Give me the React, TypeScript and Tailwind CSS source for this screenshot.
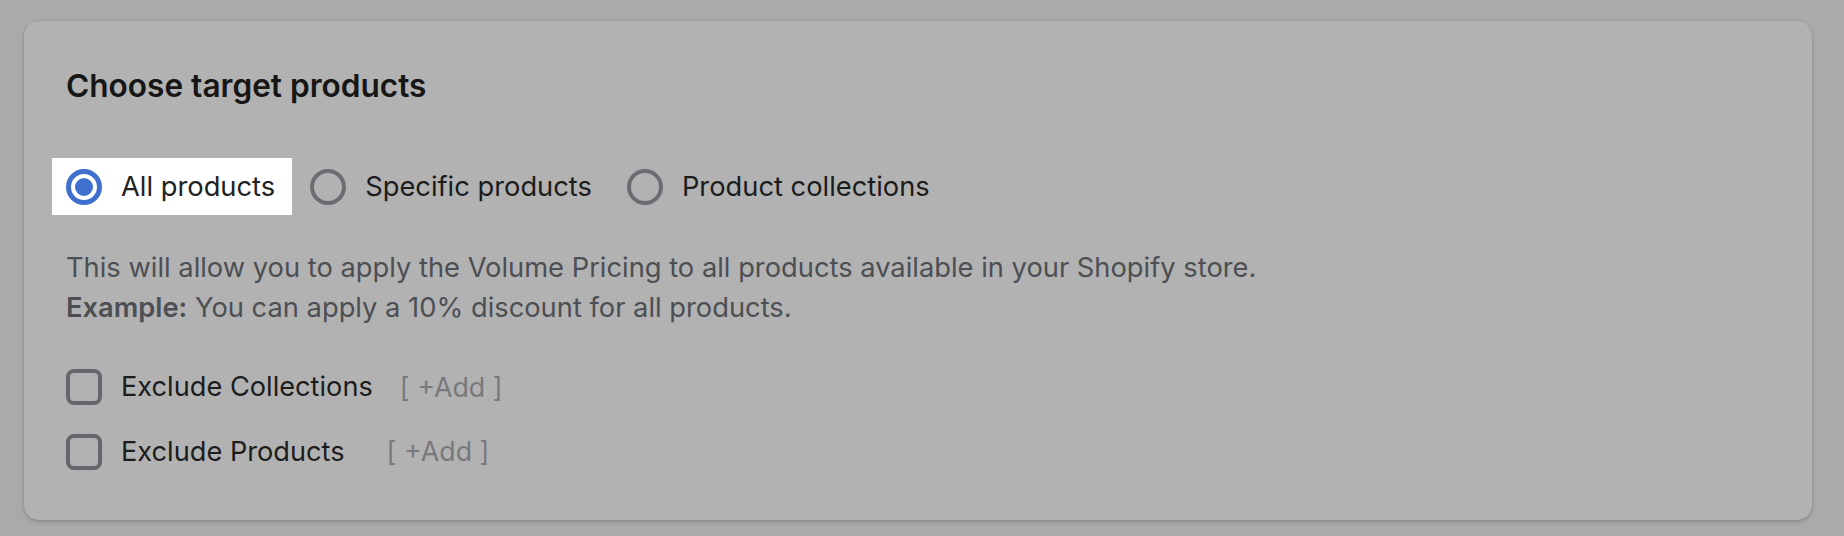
import React from "react";

const font = { fontFamily: "Inter, 'Noto Sans', sans-serif" };

function Radio({ checked }: { checked?: boolean }) {
  if (checked) {
    return (
      <span className="flex h-[36px] w-[36px] shrink-0 items-center justify-center rounded-full border-[5px] border-[#4070cf] bg-white">
        <span className="h-[18px] w-[18px] rounded-full bg-[#4070cf]" />
      </span>
    );
  }
  return <span className="h-[36px] w-[36px] shrink-0 rounded-full border-[4px] border-[#6a6d71]" />;
}

function RadioOption({ label, checked }: { label: string; checked?: boolean }) {
  return (
    <label
      className={
        "flex h-[57px] items-center gap-[19px] pl-[14px] pr-[17px] " +
        (checked ? "bg-white text-[#202223]" : "text-[#1c1c1d]")
      }
    >
      <Radio checked={checked} />
      <span className="text-[27.3px] leading-none">{label}</span>
    </label>
  );
}

function ExcludeRow({ label, gap }: { label: string; gap: string }) {
  return (
    <div className="flex h-[48px] items-center">
      <span className="h-[36px] w-[36px] shrink-0 rounded-[8px] border-[4px] border-[#64676b]" />
      <span className="ml-[19px] text-[27.2px] leading-none text-[#1c1c1d]">{label}</span>
      <span className={"text-[26.8px] leading-none text-[#77797c] " + gap}>[ +Add ]</span>
    </div>
  );
}

export default function App() {
  return (
    <div className="min-h-[536px] w-full bg-[#aaaaaa] pl-[24px] pr-[32px] pt-[21px] pb-[18px]" style={font}>
      <div className="rounded-[15px] bg-[#b2b2b2] pl-[42px] pr-[42px] pt-[45px] pb-[44px] shadow-[0_2px_4px_rgba(0,0,0,0.18),0_0_0_1px_rgba(0,0,0,0.03)]">
        <h2 className="text-[31.6px] font-semibold leading-[40px] text-[#161616]">Choose target products</h2>

        <div className="-ml-[14px] mt-[52px] flex gap-[4px]">
          <RadioOption label="All products" checked />
          <RadioOption label="Specific products" />
          <RadioOption label="Product collections" />
        </div>

        <div className="mt-[33px] text-[27.3px] leading-[40px] text-[#4c4f53]">
          <p>This will allow you to apply the Volume Pricing to all products available in your Shopify store.</p>
          <p>
            <span className="font-semibold">Example:</span> You can apply a 10% discount for all products.
          </p>
        </div>

        <div className="mt-[35px] flex flex-col gap-[16.5px]">
          <ExcludeRow label="Exclude Collections" gap="ml-[27px]" />
          <ExcludeRow label="Exclude Products" gap="ml-[42px]" />
        </div>
      </div>
    </div>
  );
}
